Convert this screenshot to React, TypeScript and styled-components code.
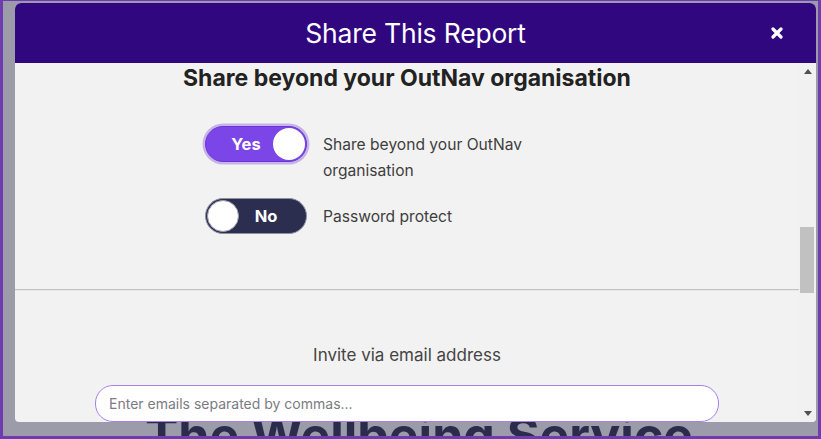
import React from "react";
import styled, { createGlobalStyle } from "styled-components";

const GlobalStyle = createGlobalStyle`
  html, body { margin: 0; padding: 0; }
  body { font-family: Inter, "Noto Sans", "Liberation Sans", sans-serif; }
  * { box-sizing: border-box; }
`;

const Frame = styled.div`
  position: relative;
  width: 821px;
  height: 439px;
  overflow: hidden;
  background: #9b9ba9;
  border-style: solid;
  border-color: #6f3bb0;
  border-width: 1px 3px 3px 3px;
`;

const Page = styled.div`
  padding: 404px 0 0 17px;
  text-align: center;
`;

const PageHeading = styled.h1`
  margin: 0;
  font-size: 50px;
  line-height: 60px;
  font-weight: 700;
  color: #2b2c4c;
  white-space: nowrap;
`;

const Modal = styled.div`
  position: absolute;
  top: 2px;
  left: 12px;
  width: 801px;
  height: 419px;
  display: flex;
  flex-direction: column;
  background: #f2f2f2;
  border-radius: 6px 6px 4px 4px;
  overflow: hidden;
`;

const Header = styled.header`
  height: 60px;
  flex: none;
  display: grid;
  grid-template-columns: 1fr auto 1fr;
  align-items: center;
  background: #30077f;
`;

const Title = styled.h2`
  grid-column: 2;
  margin: 0;
  font-size: 26.5px;
  font-weight: 400;
  color: #ffffff;
  letter-spacing: -0.2px;
`;

const CloseButton = styled.button`
  grid-column: 3;
  justify-self: end;
  margin-right: 27px;
  width: 24px;
  height: 24px;
  padding: 0;
  border: 0;
  background: transparent;
  display: flex;
  align-items: center;
  justify-content: center;
  cursor: pointer;
`;

const Body = styled.div`
  flex: 1;
  min-height: 0;
  display: flex;
`;

const Scroller = styled.div`
  flex: 1;
  min-width: 0;
  overflow: hidden;
  display: flex;
  flex-direction: column;
`;

const SectionHeading = styled.h3`
  margin: 1px 0 0;
  font-size: 23px;
  line-height: 28px;
  font-weight: 700;
  color: #222222;
  text-align: center;
`;

const Options = styled.div`
  margin: 34px 0 0 190px;
  display: flex;
  flex-direction: column;
  gap: 14px;
`;

const Row = styled.div`
  display: flex;
  align-items: flex-start;
  gap: 16px;
`;

const Track = styled.button<{ $on: boolean }>`
  flex: none;
  width: 102px;
  height: 36px;
  padding: 1px;
  border-radius: 18px;
  border: 1px solid ${(p) => (p.$on ? "#6a37d6" : "#8e8fa3")};
  background: ${(p) => (p.$on ? "#7b45e8" : "#2c2e4f")};
  box-shadow: ${(p) => (p.$on ? "0 0 0 2.5px #c6b5e4" : "none")};
  display: flex;
  flex-direction: ${(p) => (p.$on ? "row" : "row-reverse")};
  align-items: center;
  cursor: pointer;
  font-family: inherit;
`;

const Knob = styled.span<{ $on: boolean }>`
  flex: none;
  width: 32px;
  height: 32px;
  border-radius: 50%;
  background: #ffffff;
  border: ${(p) => (p.$on ? "none" : "1px solid #9a9aa6")};
`;

const ToggleText = styled.span<{ $on: boolean }>`
  flex: 1;
  padding: ${(p) => (p.$on ? "0 0 0 12px" : "0 12px 0 0")};
  text-align: center;
  color: #ffffff;
  font-size: 16.5px;
  font-weight: 700;
`;

const OptionLabel = styled.span`
  margin-top: 6px;
  max-width: 230px;
  font-size: 15.6px;
  line-height: 26px;
  color: #3e3e3e;
`;

const Divider = styled.hr`
  margin: 55px 0 0;
  border: 0;
  border-top: 1px solid #c4c4c4;
  border-bottom: 1px solid #e6e6e6;
  height: 0;
`;

const InviteLabel = styled.p`
  margin: 52px 0 0;
  font-size: 17px;
  line-height: 24px;
  color: #444444;
  text-align: center;
`;

const EmailInput = styled.input`
  flex: none;
  display: block;
  margin: 18px auto 0;
  width: 624px;
  height: 37px;
  padding: 0 13px;
  border: 1px solid #a77fe9;
  border-radius: 18px;
  background: #ffffff;
  font-family: inherit;
  font-size: 14px;
  color: #333;
  outline: none;
  &::placeholder { color: #7b7b82; }
`;

const ScrollBar = styled.div`
  width: 17px;
  flex: none;
  display: flex;
  flex-direction: column;
  background: #f1f1f1;
`;

const ScrollArrow = styled.div`
  height: 17px;
  flex: none;
  display: flex;
  align-items: center;
  justify-content: center;
`;

const ScrollTrack = styled.div<{ $offset: number }>`
  flex: 1;
  padding: ${(p) => p.$offset}px 2px 0 1px;
`;

const Thumb = styled.div`
  height: 66px;
  background: #c1c1c1;
`;

const Arrow = ({ down }: { down?: boolean }) => (
  <svg width="8" height="5" viewBox="0 0 8 5">
    <polygon points={down ? "0,0 8,0 4,5" : "0,5 8,5 4,0"} fill="#505050" />
  </svg>
);

const Toggle = ({ on }: { on: boolean }) => (
  <Track $on={on} role="switch" aria-checked={on}>
    <ToggleText $on={on}>{on ? "Yes" : "No"}</ToggleText>
    <Knob $on={on} />
  </Track>
);

export default function App() {
  return (
    <>
      <GlobalStyle />
      <Frame>
        <Page>
          <PageHeading>The Wellbeing Service</PageHeading>
        </Page>
        <Modal role="dialog" aria-label="Share This Report">
          <Header>
            <Title>Share This Report</Title>
            <CloseButton aria-label="Close">
              <svg width="12" height="12" viewBox="0 0 12 12">
                <path d="M2 2 L10 10 M10 2 L2 10" stroke="#ffffff" strokeWidth="3.2" strokeLinecap="round" />
              </svg>
            </CloseButton>
          </Header>
          <Body>
            <Scroller>
              <SectionHeading>Share beyond your OutNav organisation</SectionHeading>
              <Options>
                <Row>
                  <Toggle on={true} />
                  <OptionLabel>Share beyond your OutNav organisation</OptionLabel>
                </Row>
                <Row>
                  <Toggle on={false} />
                  <OptionLabel>Password protect</OptionLabel>
                </Row>
              </Options>
              <Divider />
              <InviteLabel>Invite via email address</InviteLabel>
              <EmailInput placeholder="Enter emails separated by commas..." />
            </Scroller>
            <ScrollBar>
              <ScrollArrow><Arrow /></ScrollArrow>
              <ScrollTrack $offset={147}>
                <Thumb />
              </ScrollTrack>
              <ScrollArrow><Arrow down /></ScrollArrow>
            </ScrollBar>
          </Body>
        </Modal>
      </Frame>
    </>
  );
}
